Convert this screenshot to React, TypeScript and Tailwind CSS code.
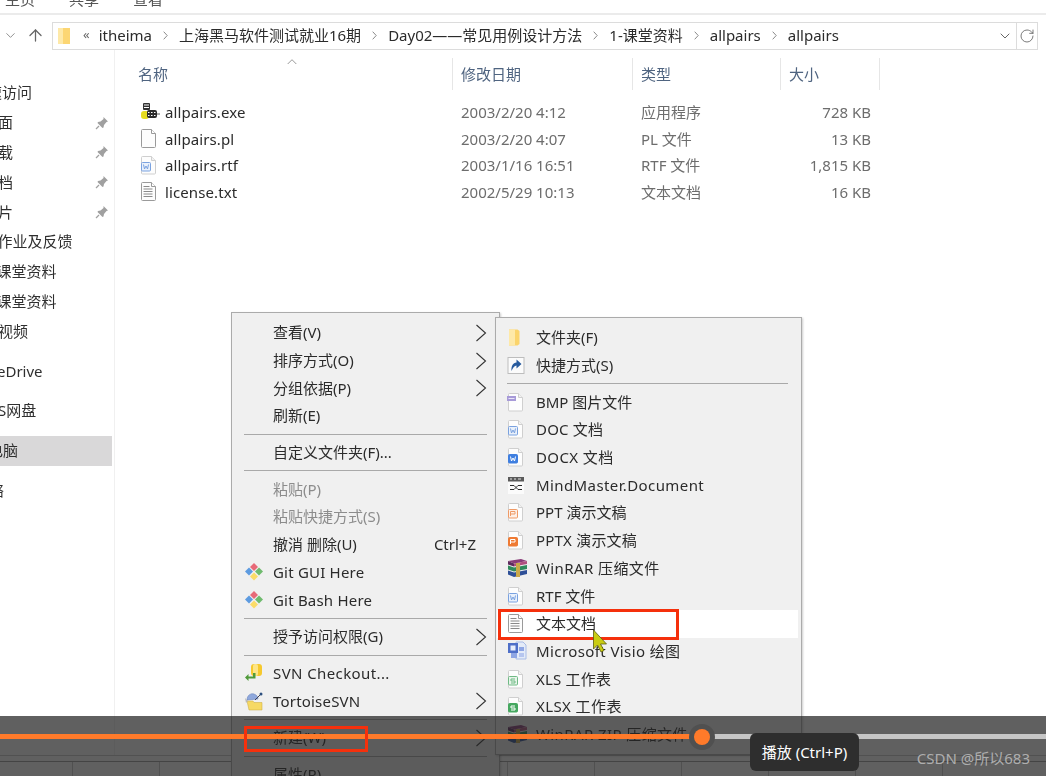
import React from "react";
import { ArrowUp, ChevronDown, RotateCw } from "lucide-react";

type IconKind = "folder" | "shortcut" | "bmp" | "doc" | "docx" | "mind" | "ppt" | "pptx" | "rar" | "rtf" | "txt" | "visio" | "xls" | "xlsx" | "git" | "svn" | "tortoise" | "blank" | "exe";

const Page = ({ children }: { children?: React.ReactNode }) => (
  <>
    <path d="M2.500 .5h9l4 4v12.500a1 1 0 0 1-1 1h-12a1 1 0 0 1-1-1v-15.500a1 1 0 0 1 1-1z" fill="#fdfdfd" stroke="#cfcfcf" />
    <path d="M11.500 .5v4h4" fill="#f2f2f2" stroke="#cfcfcf" />
    {children}
  </>
);

const Badge = ({ stroke, fill, glyph, light }: { stroke: string; fill: string; glyph: string; light?: boolean }) => (
  <>
    <rect x="1.500" y="6.500" width="9" height="8.500" rx="1" fill={fill} stroke={stroke} />
    <path d={glyph} fill="none" stroke={light ? stroke : "#ffffff"} strokeWidth="1" />
  </>
);

const wGlyph = "M3.500 8.500l1 4.500 1.500-3 1.500 3 1-4.500";
const pGlyph = "M3.500 13v-4.500h4.500v2.500h-4.500";
const sGlyph = "M8 9h-4v2h4v2h-4";

function Icon({ kind }: { kind: IconKind }) {
  const s = { width: 18, height: 19, viewBox: "0 0 18 19" };
  switch (kind) {
    case "folder":
      return (
        <svg {...s}>
          <path d="M2 1.500h8.500l2 1.500v13l-2 1.500h-8.500z" fill="#fbd46b" />
          <path d="M2 1.500h6v16h-6z" fill="#fee9a8" />
        </svg>
      );
    case "shortcut":
      return (
        <svg {...s}>
          <rect x="1" y="1.500" width="16" height="16" fill="#fbfbfb" stroke="#bdbdbd" />
          <path d="M4.500 15c-.5-5 1.500-8 5-8.500v-3l5 4.500-5 4.500v-3c-2 .2-3.500 2-5 5.500z" fill="#285b9e" />
        </svg>
      );
    case "bmp":
      return (
        <svg {...s}>
          <Page />
          <rect x="0" y="3" width="9" height="5" fill="#a79ad8" />
          <path d="M1.500 5.500h6" stroke="#e9e5f7" />
        </svg>
      );
    case "doc":
    case "rtf":
      return (
        <svg {...s}>
          <Page>
            <Badge stroke="#7aa2e0" fill="#eaf1fb" glyph={wGlyph} light />
          </Page>
        </svg>
      );
    case "docx":
      return (
        <svg {...s}>
          <Page>
            <Badge stroke="#3f7fe0" fill="#3f7fe0" glyph={wGlyph} />
          </Page>
        </svg>
      );
    case "ppt":
      return (
        <svg {...s}>
          <Page>
            <Badge stroke="#ef9a66" fill="#fdf0e8" glyph={pGlyph} light />
          </Page>
        </svg>
      );
    case "pptx":
      return (
        <svg {...s}>
          <Page>
            <Badge stroke="#ef7a33" fill="#ef7a33" glyph={pGlyph} />
          </Page>
        </svg>
      );
    case "xls":
      return (
        <svg {...s}>
          <Page>
            <Badge stroke="#6fbb85" fill="#e8f4ea" glyph={sGlyph} light />
          </Page>
        </svg>
      );
    case "xlsx":
      return (
        <svg {...s}>
          <Page>
            <Badge stroke="#46a860" fill="#46a860" glyph={sGlyph} />
          </Page>
        </svg>
      );
    case "blank":
      return (
        <svg width={16} height={20} viewBox="0 0 16 20">
          <path d="M2.500 .5h9l4 4v13a1 1 0 0 1-1 1h-12a1 1 0 0 1-1-1v-16a1 1 0 0 1 1-1z" fill="#fdfdfd" stroke="#9a9a9a" />
          <path d="M11.500 .5v4h4" fill="#fff" stroke="#9a9a9a" />
        </svg>
      );
    case "txt":
      return (
        <svg width={16} height={20} viewBox="0 0 16 20">
          <path d="M2.500 .5h9l4 4v13a1 1 0 0 1-1 1h-12a1 1 0 0 1-1-1v-16a1 1 0 0 1 1-1z" fill="#fdfdfd" stroke="#9a9a9a" />
          <path d="M11.500 .5v4h4" fill="#fff" stroke="#9a9a9a" />
          <path d="M3.500 4.500h6M3.500 7h9M3.500 9.500h9M3.500 12h9M3.500 14.500h9" stroke="#8a8a8a" />
        </svg>
      );
    case "mind":
      return (
        <svg {...s}>
          <rect x="1" y="1" width="16" height="17" fill="#fbfbfb" />
          <rect x="1" y="1" width="16" height="4.500" fill="#5a5a5a" />
          <path d="M3 3h2M7 3h2M11 3h3" stroke="#e5e5e5" />
          <path d="M3 9.500h4l2 2-2 2h-4M15 9.500h-4l-2 2 2 2h4" fill="none" stroke="#2c2c2c" />
        </svg>
      );
    case "rar":
      return (
        <svg width="21" height="20" viewBox="0 0 21 20">
          <path d="M1 3l13-2 6 2-13 2.500z" fill="#8a3b78" />
          <path d="M1 3l6 2.500v3l-6-2z" fill="#5e2a5e" />
          <path d="M7 5.500l13-2.500v3l-13 2.500z" fill="#b0507f" />
          <path d="M1 7.500l6 2 13-2.500v4l-13 2.500-6-2z" fill="#2f8a5b" />
          <path d="M1 12.500l6 2 13-2.500v4l-13 3-6-2.500z" fill="#2e4f97" />
          <path d="M9 5h4v14h-4z" fill="#c9a84a" />
        </svg>
      );
    case "visio":
      return (
        <svg width="20" height="20" viewBox="0 0 20 20">
          <path d="M9 1h7l3 3v14h-10z" fill="#e4ebf8" stroke="#a9bce6" />
          <rect x="1" y="2" width="10" height="10" fill="#4f6fc8" />
          <rect x="3.500" y="4.500" width="5" height="5" fill="#e8eefb" />
          <rect x="4" y="12" width="6" height="5" fill="#8fa6e4" />
          <rect x="12" y="6" width="5" height="4" fill="#8fa6e4" />
          <rect x="12" y="12" width="5" height="4" fill="#b6c6ef" />
        </svg>
      );
    case "git":
      return (
        <svg width="20" height="20" viewBox="0 0 20 20">
          <path d="M10 1l4 4-4 4-4-4z" fill="#e76a78" />
          <path d="M5 5.500l4 4-4 4-4-4z" fill="#5d9be0" />
          <path d="M15 5.500l4 4-4 4-4-4z" fill="#6fbb6e" />
          <path d="M10 10.500l4 4-4 4-4-4z" fill="#fbdc68" />
        </svg>
      );
    case "svn":
      return (
        <svg width="20" height="20" viewBox="0 0 20 20">
          <rect x="7" y="1" width="11" height="12" rx="3" fill="#f6c92e" />
          <rect x="9" y="1" width="5" height="12" rx="2" fill="#fde587" />
          <path d="M9 10v3.500h-4.500v-2.500l-3.500 3.500 3.500 3.500v-2.500h7v-5.500z" fill="#4f9a3a" />
        </svg>
      );
    case "tortoise":
      return (
        <svg width="20" height="20" viewBox="0 0 20 20">
          <path d="M3 9c0-5 4-7 7-6 3 1 4 3 4 5z" fill="#8fa8dc" stroke="#5f7ab8" strokeWidth=".5" />
          <path d="M3 10h6l1 1.500h8v7.500h-13z" fill="#f6d964" stroke="#c9a93a" strokeWidth=".5" />
          <path d="M1 7l3 3-2 2z" fill="#b9b9b9" />
          <circle cx="17" cy="3" r="1.500" fill="#2d4f7f" />
          <path d="M11 9l5-5" stroke="#445" />
        </svg>
      );
    case "exe":
      return (
        <svg width="21" height="20" viewBox="0 0 21 20">
          <rect x="1" y="9" width="8" height="8" rx="3" fill="#e6dc1e" />
          <rect x="3" y="1" width="7" height="7" rx="1" fill="#333" />
          <path d="M4 3h5M4 5.500h5" stroke="#fff" />
          <rect x="7" y="8" width="10" height="8" rx="2" fill="#2a2a2a" />
          <path d="M8 10.500h8M8 13.500h8" stroke="#fff" strokeDasharray="1.500 1.500" />
          <path d="M17 12h3" stroke="#555" />
        </svg>
      );
  }
}

const Chevron = () => (
  <svg width="12" height="18" viewBox="0 0 12 18" className="shrink-0">
    <path d="M1.500 1l9 8-9 8" fill="none" stroke="#333" strokeWidth="1.100" />
  </svg>
);

const PinIcon = () => (
  <svg width="14" height="14" viewBox="0 0 14 14">
    <path d="M8.500 1l4.500 4.500-1.500.5-2.500 3-.5 2.500-1 .5-5-5 .5-1 2.500-.5 3-2.500z" fill="#a0a0a0" />
    <path d="M4 10l-3 3" stroke="#a0a0a0" strokeWidth="1.200" />
  </svg>
);

const Sep = () => (
  <div className="h-[9px] flex items-center">
    <div className="h-px w-full bg-[#a9a9a9]" />
  </div>
);

type RowData = { label: string; icon?: IconKind; arrow?: boolean; disabled?: boolean; shortcut?: string; active?: boolean; wide?: string };

function Item({ d, slot }: { d: RowData; slot: string }) {
  return (
    <div className="h-[27.7px] flex items-center">
      <div className={`${slot} flex items-center shrink-0`}>{d.icon && <Icon kind={d.icon} />}</div>
      <span className={`flex-1 whitespace-nowrap ${d.wide ?? ""} ${d.disabled ? "text-[#8c8c8c]" : "text-[#2b2b2b]"}`}>{d.label}</span>
      {d.shortcut && <span className="text-[#2b2b2b] whitespace-nowrap mr-[11px]">{d.shortcut}</span>}
      {d.arrow && <Chevron />}
    </div>
  );
}

const tree: { t: string; ml: string; pin?: boolean; gap?: boolean; sel?: boolean }[] = [
  { t: "快速访问", ml: "-ml-[28px]" },
  { t: "桌面", ml: "-ml-[17px]", pin: true },
  { t: "下载", ml: "-ml-[17px]", pin: true },
  { t: "文档", ml: "-ml-[17px]", pin: true },
  { t: "图片", ml: "-ml-[17px]", pin: true },
  { t: "2作业及反馈", ml: "-ml-[11px]" },
  { t: "1-课堂资料", ml: "-ml-[17px]" },
  { t: "1-课堂资料", ml: "-ml-[17px]" },
  { t: "录视频", ml: "-ml-[17px]" },
  { t: "OneDrive", ml: "-ml-[24px]", gap: true },
  { t: "WPS网盘", ml: "-ml-[25px]", gap: true },
  { t: "此电脑", ml: "-ml-[27px]", gap: true, sel: true },
  { t: "网络", ml: "-ml-[26px]", gap: true },
];

const files: { n: string; i: IconKind; d: string; t: string; s: string }[] = [
  { n: "allpairs.exe", i: "exe", d: "2003/2/20 4:12", t: "应用程序", s: "728 KB" },
  { n: "allpairs.pl", i: "blank", d: "2003/2/20 4:07", t: "PL 文件", s: "13 KB" },
  { n: "allpairs.rtf", i: "rtf", d: "2003/1/16 16:51", t: "RTF 文件", s: "1,815 KB" },
  { n: "license.txt", i: "txt", d: "2002/5/29 10:13", t: "文本文档", s: "16 KB" },
];

const crumbs = ["itheima", "上海黑马软件测试就业16期", "Day02——常见用例设计方法", "1-课堂资料", "allpairs", "allpairs"];

const latin = "tracking-[0.2px]";
const latinMore = "tracking-[0.4px]";

const menuA: (RowData | "sep")[] = [
  { label: "查看(V)", arrow: true },
  { label: "排序方式(O)", arrow: true },
  { label: "分组依据(P)", arrow: true },
  { label: "刷新(E)" },
  "sep",
  { label: "自定义文件夹(F)..." },
  "sep",
  { label: "粘贴(P)", disabled: true },
  { label: "粘贴快捷方式(S)", disabled: true },
  { label: "撤消 删除(U)", shortcut: "Ctrl+Z" },
  { label: "Git GUI Here", icon: "git", wide: latin },
  { label: "Git Bash Here", icon: "git", wide: latin },
  "sep",
  { label: "授予访问权限(G)", arrow: true },
  "sep",
  { label: "SVN Checkout...", icon: "svn", wide: latinMore },
  { label: "TortoiseSVN", icon: "tortoise", arrow: true, wide: latin },
  "sep",
  { label: "新建(W)", arrow: true },
  "sep",
  { label: "属性(R)" },
];

const menuB: (RowData | "sep")[] = [
  { label: "文件夹(F)", icon: "folder" },
  { label: "快捷方式(S)", icon: "shortcut" },
  "sep",
  { label: "BMP 图片文件", icon: "bmp" },
  { label: "DOC 文档", icon: "doc", wide: latin },
  { label: "DOCX 文档", icon: "docx", wide: latinMore },
  { label: "MindMaster.Document", icon: "mind", wide: latinMore },
  { label: "PPT 演示文稿", icon: "ppt" },
  { label: "PPTX 演示文稿", icon: "pptx", wide: latin },
  { label: "WinRAR 压缩文件", icon: "rar", wide: latinMore },
  { label: "RTF 文件", icon: "rtf" },
  { label: "文本文档", icon: "txt", active: true },
  { label: "Microsoft Visio 绘图", icon: "visio", wide: latinMore },
  { label: "XLS 工作表", icon: "xls", wide: latin },
  { label: "XLSX 工作表", icon: "xlsx", wide: latinMore },
  { label: "WinRAR ZIP 压缩文件", icon: "rar", wide: latinMore },
];

export default function App() {
  return (
    <div className="relative w-[1046px] h-[776px] overflow-hidden bg-white font-['Noto_Sans','Noto_Sans_CJK_SC',sans-serif] text-[15px] leading-none">
      <div className="relative w-full h-full flex flex-col blur-[0.4px]">
        {/* ribbon tabs, cut off by the top edge */}
        <div className="h-[15px] shrink-0 border-b-2 border-[#ebebeb] overflow-hidden flex gap-[34px] pl-[5px] text-[#555]">
          <span className="-mt-[8px]">主页</span>
          <span className="-mt-[8px]">共享</span>
          <span className="-mt-[8px]">查看</span>
        </div>

        {/* address row */}
        <div className="h-[35px] shrink-0 flex items-start pt-[7px] pl-[3px] pr-[8px]">
          <ChevronDown size={15} strokeWidth={1.5} className="text-[#8a8a8a] w-[15px] mt-[6px]" />
          <ArrowUp size={19} strokeWidth={1.6} className="text-[#666] ml-[8px] mt-[4px]" />
          <div className="ml-[7px] flex-1 h-[28px] border border-[#dcdcdc] flex items-center">
            <div className="ml-[5px] w-[12px] h-[16px] bg-[#fcd673] border-l-[5px] border-[#fee9a8]" />
            <span className="ml-[13px] text-[#666] text-[13px] -mt-[4px]">«</span>
            <div className="flex items-center ml-[9px] gap-[11px] -mt-[1px] text-[#2b2b2b] flex-1">
              {crumbs.map((c, i) => (
                <React.Fragment key={i}>
                  {i > 0 && (
                    <svg width="5" height="9" viewBox="0 0 5 9" className="shrink-0">
                      <path d="M.7 .7l3.500 3.800-3.500 3.800" fill="none" stroke="#8a8a8a" />
                    </svg>
                  )}
                  <span className="whitespace-nowrap">{c}</span>
                </React.Fragment>
              ))}
            </div>
            <ChevronDown size={16} strokeWidth={1.5} className="text-[#666] mr-[3px]" />
            <div className="w-[21px] h-full border-l border-[#dcdcdc] flex items-center justify-center">
              <RotateCw size={16} strokeWidth={1.3} className="text-[#666]" />
            </div>
          </div>
        </div>

        {/* nav tree and file list */}
        <div className="flex-1 flex min-h-0">
          <div className="w-[115px] shrink-0 border-r border-[#f0f0f0] pt-[28px] pr-[2px] overflow-hidden">
            {tree.map((r, i) => (
              <div key={i} className={`h-[29.8px] flex items-center justify-between pr-[3px] ${r.gap ? "mt-[10px]" : ""} ${r.sel ? "bg-[#d9d8d9]" : ""}`}>
                <span className={`${r.ml} whitespace-nowrap text-[#2f2f2f]`}>{r.t}</span>
                {r.pin && <PinIcon />}
              </div>
            ))}
          </div>

          <div className="flex-1 pl-[15px] pt-[8px]">
            <div className="grid grid-cols-[323px_180px_148px_99px] h-[32px] text-[#4f6480]">
              {["名称", "修改日期", "类型", "大小"].map((h, i) => (
                <div key={h} className="relative border-r border-[#e6e6e6] pl-[8px] flex items-center">
                  {h}
                  {i === 0 && (
                    <svg width="10" height="6" viewBox="0 0 10 6" className="absolute top-[1px] left-[157px]">
                      <path d="M.7 5l4.300-4.300 4.300 4.300" fill="none" stroke="#999" />
                    </svg>
                  )}
                </div>
              ))}
            </div>
            <div className="mt-[9px]">
              {files.map((f) => (
                <div key={f.n} className="grid grid-cols-[323px_180px_148px_99px] h-[26.7px] items-center text-[#6d6d6d]">
                  <div className="flex items-center pl-[10px]">
                    <div className="w-[25px] flex items-center shrink-0">
                      <Icon kind={f.i} />
                    </div>
                    <span className="text-[#2b2b2b] tracking-[0.1px]">{f.n}</span>
                  </div>
                  <div className="pl-[8px]">{f.d}</div>
                  <div className="pl-[8px]">{f.t}</div>
                  <div className="pr-[9px] text-right">{f.s}</div>
                </div>
              ))}
            </div>
          </div>
        </div>

        {/* sheet behind the window */}
        <div className="h-[21px] shrink-0 border-t border-[#c9c9c9] pt-[5px]">
          <div className="h-full border-t border-[#9a9a9a] flex pl-[72px]">
            {Array.from({ length: 11 }).map((_, i) => (
              <div key={i} className="w-[87px] shrink-0 border-l border-[#c4c4c4]" />
            ))}
          </div>
        </div>

        {/* context menus */}
        <div className="absolute left-[231px] top-[312px] w-[269px] bg-[#f0f0f0] border border-[#ababab] pt-[6px] pl-[12px] pr-[12px] shadow-[1px_1px_2px_rgba(0,0,0,0.2)]">
          {menuA.map((r, i) => (r === "sep" ? <Sep key={i} /> : <Item key={i} d={r} slot="w-[29px]" />))}
        </div>
        <div className="absolute left-[495px] top-[317px] w-[307px] bg-[#f0f0f0] border border-[#ababab] pt-[6px] pb-[6px] pl-px pr-[3px] shadow-[1px_1px_2px_rgba(0,0,0,0.2)]">
          {menuB.map((r, i) =>
            r === "sep" ? (
              <div key={i} className="pl-[10px] pr-[10px]">
                <Sep />
              </div>
            ) : (
              <div key={i} className={r.active ? "bg-white pl-[10px]" : "pl-[10px]"}>
                <Item d={r} slot="w-[29px]" />
              </div>
            ),
          )}
        </div>
      </div>

      {/* video player bar */}
      <div className="absolute left-0 right-0 bottom-0 h-[60px] bg-[rgba(35,35,35,0.72)]">
        <div className="absolute left-0 top-[18px] w-[700px] h-[5px] bg-[#ff7a2a]" />
        <div className="absolute left-[700px] right-0 top-[18px] h-[5px] bg-[#c6c6c6]" />
        <div className="absolute left-[689px] top-[8px] w-[26px] h-[26px] rounded-full bg-[#505050] flex items-center justify-center">
          <div className="w-[16px] h-[16px] rounded-full bg-[#ff7a2a]" />
        </div>
        <div className="absolute left-[750px] top-[17px] w-[109px] h-[38px] rounded-[6px] bg-[#2e2e2e] flex items-center justify-center text-white text-[15px]">
          播放 (Ctrl+P)
        </div>
        <div className="absolute right-[16px] top-[35px] text-[#aeaeae] text-[15px] whitespace-nowrap">CSDN @所以683</div>
      </div>

      {/* annotations */}
      <div className="absolute left-[498px] top-[609px] w-[181px] h-[31px] border-[3px] border-[#f5300c]" />
      <div className="absolute left-[244px] top-[726px] w-[124px] h-[26px] border-[3px] border-[#f5300c]" />
      <svg width="17" height="24" viewBox="0 0 17 24" className="absolute left-[592px] top-[629px]">
        <path d="M1.500 1v19l4-4 3.500 7 3-1.500-3.500-6.500h6z" fill="#c9cc12" stroke="#5c5c10" strokeWidth=".8" />
      </svg>
    </div>
  );
}
